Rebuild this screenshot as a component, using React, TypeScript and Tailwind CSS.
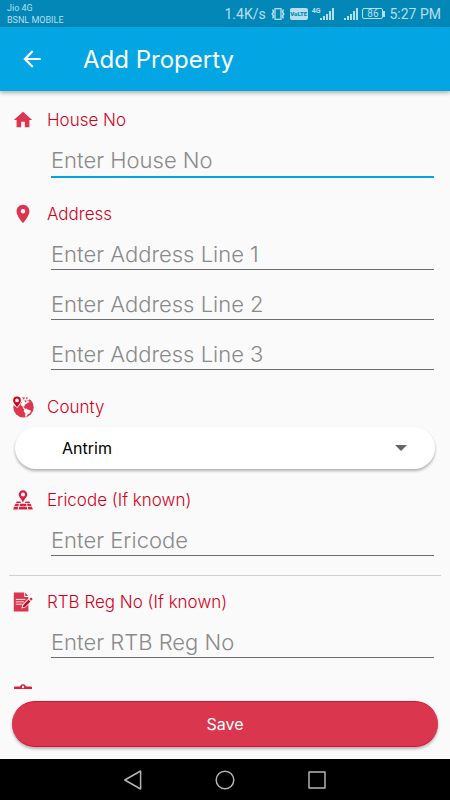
import React, { useState } from "react";
import { MdArrowBack, MdHome, MdLocationOn } from "react-icons/md";

const GlobeIcon = () => (
  <svg viewBox="0 0 22 22" className="w-[22px] h-[22px]" aria-hidden="true">
    <circle cx="11.5" cy="11.3" r="10.2" fill="#dc354d" />
    {/* gap round the pin */}
    <path d="M0 0H9.8L10.2 5L7.4 9.4L5.2 12L1 8.8Z" fill="#fafafa" />
    {/* land */}
    <path d="M9.8 2.4L11 .6L15 .8L18 2.8L16.4 5L17.8 6L15.2 7.2L13 8.8L12.2 10.4L10.4 10.4L8.6 8.8L10 6Z" fill="#fafafa" />
    <path d="M12 13.2L14.6 12.4L16 13.8L19 14.6L18.2 17L15.6 18.6L14.4 20.8L13 20.6L13.4 17.4L11.8 15.6Z" fill="#fafafa" />
    <path d="M10.6 10L12.8 12.2L13 13.6L11 12.6Z" fill="#fafafa" />
    <path d="M10.8 1.6L12.8 1.2L12.4 3.2L11.2 3.4ZM14 1.2L16.2 1.8L14.4 3.6ZM12.2 4.6L14.8 4.4L13.6 6.4ZM15.6 3.8L17 4.2L15.8 5.6Z" fill="#dc354d" />
    <path
      fillRule="evenodd"
      d="M5 .6A3.9 3.9 0 0 1 8.9 4.5C8.9 6.8 6.4 8.9 5 11.3C3.6 8.9 1.1 6.8 1.1 4.5A3.9 3.9 0 0 1 5 .6ZM5 2.5A1.9 1.9 0 1 0 5 6.3A1.9 1.9 0 1 0 5 2.5Z"
      fill="#d0021b"
    />
  </svg>
);

const MapPinIcon = () => (
  <svg viewBox="0 0 20 20" className="w-5 h-5" fill="#d9203f" aria-hidden="true">
    <path
      fillRule="evenodd"
      d="M10 .2A4.3 4.3 0 0 1 14.3 4.5C14.3 7 11.5 8.8 10 12.6C8.5 8.8 5.7 7 5.7 4.5A4.3 4.3 0 0 1 10 .2ZM10 2.5A2 2 0 1 0 10 6.5A2 2 0 1 0 10 2.5Z"
    />
    <path d="M3.6 11.6H7.4L8 13H3ZM12.6 11.6H16.4L17 13H12Z" />
    <path d="M2.4 13.8H6L5.4 16H1.4ZM7 13.8H13L13.6 16H6.4ZM14 13.8H17.6L18.6 16H14.6Z" />
    <path d="M1.1 16.8H5.2L4.7 19.6H.1ZM6.2 16.8H13.8L14.3 19.6H5.7ZM14.8 16.8H18.9L19.9 19.6H15.3Z" />
  </svg>
);

const DocumentIcon = () => (
  <svg viewBox="0 0 20 20" className="w-5 h-5" aria-hidden="true">
    <path d="M.8 .4H11.2V5H15.4V19.4H.8Z" fill="#dc354d" />
    <path d="M12.2 .6L15.2 4H12.2Z" fill="#dc354d" />
    <path d="M2.8 7.4H12.4M2.8 9.8H11M2.8 12.2H9.4" stroke="#fafafa" strokeWidth=".9" />
    <path d="M8.4 16.6L9.4 12.6L17 5L20 8L12.4 15.6Z" fill="#fafafa" />
    <path d="M9.6 15.4L10.4 12.9L15.6 7.7L17.4 9.5L12.2 14.7Z" fill="#d0021b" />
    <path d="M16.3 7L17.6 5.7Q18.3 5.3 19 6Q19.7 6.7 19.3 7.4L18 8.8Z" fill="#dc354d" />
  </svg>
);

const ClipboardIcon = () => (
  <svg viewBox="0 0 18 22" className="w-[18px] h-[22px]" aria-hidden="true">
    <path d="M1 2.4H5.6Q6.4 2.2 6.8 1.2Q7.4 .2 9 .2Q10.6 .2 11.2 1.2Q11.6 2.2 12.4 2.4H17Q18 2.4 18 3.4V21H0V3.4Q0 2.4 1 2.4Z" fill="#d9203f" />
    <circle cx="9" cy="3" r="1.2" fill="#fafafa" />
    <path d="M3 8H15M3 12H15M3 16H11" stroke="#fafafa" strokeWidth="1.4" />
  </svg>
);

const SignalBars = () => (
  <svg viewBox="0 0 14 12" className="w-[14px] h-3" fill="#b5dfee" aria-hidden="true">
    <path d="M0 10H2V12H0ZM3 8H5V12H3ZM6 6H8V12H6ZM9 3H11V12H9ZM12 0H14V12H12Z" />
  </svg>
);

function StatusBar() {
  return (
    <div className="flex items-center justify-between h-[27px] pl-[7px] pr-[9px] bg-[#0387b7] text-[#b5dfee] font-[Roboto,sans-serif]">
      <div className="text-[9px] leading-3">
        <p>Jio 4G</p>
        <p>BSNL MOBILE</p>
      </div>
      <div className="flex items-center text-sm gap-1">
        <span>1.4K/s</span>
        <svg viewBox="0 0 16 12" className="w-4 h-3" fill="none" stroke="#b5dfee" aria-hidden="true">
          <rect x="5" y=".7" width="6" height="10.6" strokeWidth="1.3" />
          <path d="M2.6 1.6L3.6 4L2.2 6L3.6 8L2.6 10.4M13.4 1.6L12.4 4L13.8 6L12.4 8L13.4 10.4" strokeWidth="1.5" />
        </svg>
        <span className="flex items-center justify-center w-[18px] h-3 rounded-xs bg-[#b5dfee] text-[#0387b7] text-[6px] leading-3 font-black">
          VoLTE
        </span>
        <span className="flex items-end">
          <span className="self-start text-[7px] leading-[7px] font-bold">4G</span>
          <SignalBars />
        </span>
        <span className="pl-1.5">
          <SignalBars />
        </span>
        <span className="flex items-center">
          <span className="flex items-center justify-center w-[21px] h-[11px] rounded-xs border border-[#b5dfee] text-[10px] leading-none">
            86
          </span>
          <span className="w-0.5 h-1.5 bg-[#b5dfee]" />
        </span>
        <span>5:27 PM</span>
      </div>
    </div>
  );
}

interface FieldLabelProps {
  icon: React.ReactNode;
  text: string;
  htmlFor: string;
}

function FieldLabel({ icon, text, htmlFor }: FieldLabelProps) {
  return (
    <label htmlFor={htmlFor} className="flex items-center h-6 gap-3 text-[17px] font-light text-[#d6001a]">
      <span className="flex items-center justify-center w-6 text-[#dc354d]">{icon}</span>
      <span className="pt-0.5">{text}</span>
    </label>
  );
}

interface LineInputProps {
  id: string;
  placeholder: string;
  active: string;
  onActivate: (id: string) => void;
}

function LineInput({ id, placeholder, active, onActivate }: LineInputProps) {
  return (
    <input
      id={id}
      type="text"
      aria-label={placeholder.replace("Enter ", "")}
      placeholder={placeholder}
      onFocus={() => onActivate(id)}
      className={`block w-full pt-1 bg-transparent text-[22px] font-light text-black placeholder:text-[#8a8a8a] outline-none ${
        active === id ? "h-[38px] border-b-2 border-[#03a4e0]" : "h-9 border-b border-[#6e6e6e]"
      }`}
    />
  );
}

export default function App() {
  const [active, setActive] = useState("houseNo");
  const [county, setCounty] = useState("Antrim");

  return (
    <div className="flex flex-col h-screen bg-[#fafafa] font-[Inter,sans-serif]">
      <StatusBar />

      <header className="z-10 flex items-center h-16 pl-[19px] gap-[38px] bg-[#03a6e2] text-white shadow-[0_2px_4px_rgba(0,0,0,0.3)]">
        <button type="button" aria-label="Back">
          <MdArrowBack className="w-[26px] h-[26px]" />
        </button>
        <h1 className="pt-0.5 text-2xl">Add Property</h1>
      </header>

      <form id="property-form" className="flex-1 min-h-0 overflow-hidden pt-[17px]" onSubmit={(e) => e.preventDefault()}>
        {/* House number */}
        <div className="pl-[11px] pr-4">
          <FieldLabel htmlFor="houseNo" text="House No" icon={<MdHome className="w-[22px] h-[22px]" />} />
          <div className="pl-10 pt-2">
            <LineInput id="houseNo" placeholder="Enter House No" active={active} onActivate={setActive} />
          </div>
        </div>

        {/* Address */}
        <div className="pl-[11px] pr-4 pt-6">
          <FieldLabel htmlFor="address1" text="Address" icon={<MdLocationOn className="w-[22px] h-[22px]" />} />
          <div className="flex flex-col gap-[14px] pl-10 pt-2">
            <LineInput id="address1" placeholder="Enter Address Line 1" active={active} onActivate={setActive} />
            <LineInput id="address2" placeholder="Enter Address Line 2" active={active} onActivate={setActive} />
            <LineInput id="address3" placeholder="Enter Address Line 3" active={active} onActivate={setActive} />
          </div>
        </div>

        {/* County */}
        <div className="pl-[11px] pr-[15px] pt-[25px]">
          <FieldLabel htmlFor="county" text="County" icon={<GlobeIcon />} />
          <div className="relative ml-1 mt-2">
            <select
              id="county"
              value={county}
              onChange={(e) => setCounty(e.target.value)}
              className="block w-full h-[42px] pl-[47px] pr-12 appearance-none rounded-full bg-white text-base text-black shadow-[0_2px_3px_rgba(0,0,0,0.3)] outline-none"
            >
              <option>Antrim</option>
              <option>Armagh</option>
              <option>Carlow</option>
              <option>Cavan</option>
            </select>
            <svg viewBox="0 0 12 6" className="absolute right-7 top-[18px] w-3 h-1.5 pointer-events-none" aria-hidden="true">
              <path d="M0 0H12L6 6Z" fill="#666666" />
            </svg>
          </div>
        </div>

        {/* Ericode */}
        <div className="pl-[11px] pr-4 pt-[19px]">
          <FieldLabel htmlFor="ericode" text="Ericode (If known)" icon={<MapPinIcon />} />
          <div className="pl-10 pt-2">
            <LineInput id="ericode" placeholder="Enter Ericode" active={active} onActivate={setActive} />
          </div>
        </div>

        <hr className="mx-[9px] mt-[19px] border-t-1 border-[#cfcfcf]" />

        {/* RTB registration */}
        <div className="pl-[11px] pr-4 pt-[14px]">
          <FieldLabel htmlFor="rtbRegNo" text="RTB Reg No (If known)" icon={<DocumentIcon />} />
          <div className="pl-10 pt-2">
            <LineInput id="rtbRegNo" placeholder="Enter RTB Reg No" active={active} onActivate={setActive} />
          </div>
        </div>

        <div className="pl-[14px] pt-[26px]">
          <ClipboardIcon />
        </div>
      </form>

      <div className="px-3 py-3">
        <button
          type="submit"
          form="property-form"
          className="block w-full h-[46px] rounded-full border-y border-[#dd0f35] bg-[#da374e] text-base text-white shadow-[0_2px_3px_rgba(0,0,0,0.3)]"
        >
          Save
        </button>
      </div>

      <nav className="flex items-center justify-center h-[41px] gap-[72px] bg-black">
        <button type="button" aria-label="Navigate back">
          <svg viewBox="0 0 20 20" className="w-5 h-5" fill="none" stroke="#b4b4b4" strokeWidth="1.5" strokeLinejoin="round">
            <path d="M17.6 1V19L1.8 10Z" />
          </svg>
        </button>
        <button type="button" aria-label="Home">
          <svg viewBox="0 0 20 20" className="w-5 h-5" fill="none" stroke="#b4b4b4" strokeWidth="1.5">
            <circle cx="10" cy="10" r="8.8" />
          </svg>
        </button>
        <button type="button" aria-label="Recent apps">
          <svg viewBox="0 0 20 20" className="w-5 h-5" fill="none" stroke="#b4b4b4" strokeWidth="1.5" strokeLinejoin="round">
            <rect x="2" y="2" width="16" height="16" />
          </svg>
        </button>
      </nav>
    </div>
  );
}
